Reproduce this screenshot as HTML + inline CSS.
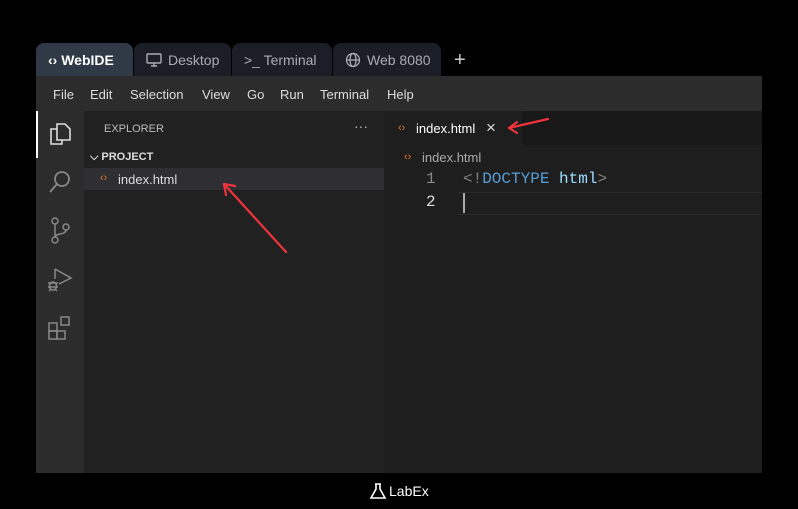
<!DOCTYPE html>
<html><head><meta charset="utf-8"><style>
*{margin:0;padding:0;box-sizing:border-box}
body{width:798px;height:509px;background:#000;font-family:"Liberation Sans",sans-serif;position:relative;overflow:hidden;color:#ccc}
.abs{position:absolute}
.tab{position:absolute;top:43px;height:33px;border-radius:8px 8px 0 0;background:#1b1e26;color:#a9acb3;font-size:14px;display:flex;align-items:center;gap:6px;padding-left:12px}
.code{font-family:"Liberation Mono",monospace;font-size:16px}
</style></head><body>
<div class="tab" style="left:36px;width:97px;background:#2f3a46;color:#fff;font-weight:bold">‹› WebIDE</div>
<div class="tab" style="left:134px;width:97px"><svg width="16" height="14" viewBox="0 0 16 14" fill="none" stroke="#a9acb3" stroke-width="1.4"><rect x="1" y="1" width="14" height="9" rx="1"/><path d="M5 13h6M8 10v3"/></svg>Desktop</div>
<div class="tab" style="left:232px;width:100px">&gt;_ Terminal</div>
<div class="tab" style="left:333px;width:108px"><svg width="16" height="16" viewBox="0 0 16 16" fill="none" stroke="#a9acb3" stroke-width="1.3"><circle cx="8" cy="8" r="6.5"/><ellipse cx="8" cy="8" rx="3" ry="6.5"/><path d="M1.5 8h13"/></svg>Web 8080</div>
<div class="abs" style="left:454px;top:49px;color:#ccc;font-size:20px">+</div>
<div class="abs" style="left:36px;top:76px;width:726px;height:35px;background:#2c2c2c"></div>
<div class="abs" style="left:53px;top:87px;font-size:13px;color:#ddd">
<span style="position:absolute;left:0">File</span><span style="position:absolute;left:37px">Edit</span><span style="position:absolute;left:77px">Selection</span><span style="position:absolute;left:149px">View</span><span style="position:absolute;left:194px">Go</span><span style="position:absolute;left:227px">Run</span><span style="position:absolute;left:267px">Terminal</span><span style="position:absolute;left:334px">Help</span></div>
<div class="abs" style="left:36px;top:111px;width:48px;height:362px;background:#2c2c2c"></div>
<div class="abs" style="left:36px;top:111px;width:2px;height:47px;background:#fff"></div>
<svg class="abs" style="left:46px;top:120px" width="28" height="28" viewBox="0 0 28 28" fill="none" stroke="#ddd" stroke-width="1.6"><path d="M11 4h8l5 5v11h-13z"/><path d="M11 9H5v15h11v-4"/></svg>
<svg class="abs" style="left:46px;top:168px" width="28" height="28" viewBox="0 0 28 28" fill="none" stroke="#888" stroke-width="1.8"><circle cx="16" cy="11" r="7"/><path d="M11 16l-7 8"/></svg>
<svg class="abs" style="left:46px;top:216px" width="28" height="30" viewBox="0 0 28 30" fill="none" stroke="#888" stroke-width="1.5"><circle cx="9" cy="5" r="3"/><circle cx="9" cy="24" r="3"/><circle cx="20" cy="11" r="3"/><path d="M9 8v13M20 14c0 5-11 3-11 7"/></svg>
<svg class="abs" style="left:46px;top:266px" width="28" height="28" viewBox="0 0 28 28" fill="none" stroke="#888" stroke-width="1.5"><path d="M9 3v10M9 3l16 9-12 6"/><ellipse cx="7" cy="20" rx="3.5" ry="4"/><path d="M2 17h10M2 21h10M3 25l2-2M11 25l-2-2"/></svg>
<svg class="abs" style="left:46px;top:314px" width="28" height="28" viewBox="0 0 28 28" fill="none" stroke="#888" stroke-width="1.5"><rect x="3" y="9" width="8" height="8"/><rect x="3" y="17" width="8" height="8"/><rect x="11" y="17" width="8" height="8"/><rect x="15" y="3" width="8" height="8"/></svg>
<div class="abs" style="left:84px;top:111px;width:300px;height:362px;background:#212121"></div>
<div class="abs" style="left:104px;top:123px;font-size:11px;color:#bbb">EXPLORER</div>
<div class="abs" style="left:354px;top:118px;font-size:14px;color:#bbb">···</div>
<div class="abs" style="left:90px;top:151px;font-size:11px;color:#ddd;font-weight:bold">⌵ PROJECT</div>
<div class="abs" style="left:84px;top:168px;width:300px;height:22px;background:#2f2f33"></div>
<div class="abs" style="left:100px;top:172px;font-size:11px;color:#e0763a">‹›</div>
<div class="abs" style="left:118px;top:172px;font-size:13px;color:#ddd">index.html</div>
<div class="abs" style="left:384px;top:111px;width:378px;height:362px;background:#1e1e1e"></div>
<div class="abs" style="left:522px;top:111px;width:240px;height:34px;background:#181818"></div>
<div class="abs" style="left:398px;top:122px;font-size:11px;color:#e0763a">‹›</div>
<div class="abs" style="left:416px;top:121px;font-size:13px;color:#fff">index.html</div>
<div class="abs" style="left:486px;top:118px;font-size:17px;color:#ddd">×</div>
<div class="abs" style="left:404px;top:151px;font-size:11px;color:#e0763a">‹›</div>
<div class="abs" style="left:422px;top:150px;font-size:13px;color:#aaa">index.html</div>
<div class="abs code" style="left:426px;top:170px;color:#888">1</div>
<div class="abs code" style="left:426px;top:193px;color:#ddd">2</div>
<div class="abs" style="left:458px;top:192px;width:304px;height:23px;border-top:1px solid #2a2a2a;border-bottom:1px solid #2a2a2a"></div>
<div class="abs code" style="left:463px;top:170px;color:#808080">&lt;!<span style="color:#569cd6">DOCTYPE</span> <span style="color:#9cdcfe">html</span>&gt;</div>
<div class="abs" style="left:463px;top:193px;width:2px;height:20px;background:#aaa"></div>
<svg class="abs" style="left:0;top:0" width="798" height="509"><g stroke="#f0323c" stroke-width="2.2" fill="none" stroke-linecap="round"><path d="M286 252L224 184M224 184l2 11M224 184l11 2"/><path d="M548 119L509 128M509 128l8 -6M509 128l8 5"/></g></svg>
<svg class="abs" style="left:369px;top:482px" width="18" height="18" viewBox="0 0 18 18" fill="none" stroke="#fff" stroke-width="1.6"><path d="M6 2h6M7 2v5L2 16h14L11 7V2"/></svg>
<div class="abs" style="left:389px;top:483px;font-size:14px;color:#fff">LabEx</div>
</body></html>
